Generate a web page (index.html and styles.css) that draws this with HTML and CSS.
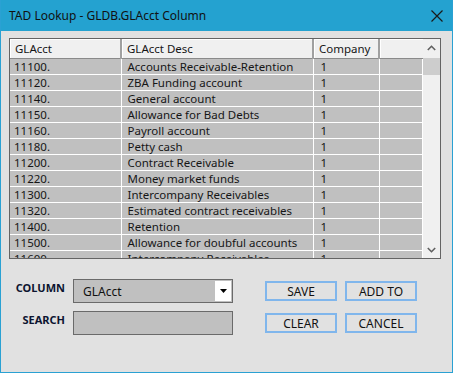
FILE: index.html
```html
<!DOCTYPE html>
<html>
<head>
	<title>TAD Lookup</title>
	<meta charset="utf-8">
	<link rel="stylesheet" href="styles.css">
</head>
<body>

<div class="window">
	<div class="titlebar">
		<span class="title">TAD Lookup - GLDB.GLAcct Column</span>
		<svg class="close" width="12" height="12" viewBox="0 0 12 12">
			<path d="M0.5 0.5 L11.5 11.5 M11.5 0.5 L0.5 11.5" stroke="#1a1a1a" stroke-width="1.2" fill="none"/>
		</svg>
	</div>

	<div class="listbox">
		<div class="grid-area">
			<table id="lookupList">
				<colgroup>
					<col style="width:111px">
					<col style="width:192px">
					<col style="width:66px">
					<col>
				</colgroup>
				<tr class="head">
					<th>GLAcct</th>
					<th>GLAcct Desc</th>
					<th>Company</th>
					<th></th>
				</tr>
				<tr><td>11100.</td><td>Accounts Receivable-Retention</td><td>1</td><td></td></tr>
				<tr><td>11120.</td><td>ZBA Funding account</td><td>1</td><td></td></tr>
				<tr><td>11140.</td><td>General account</td><td>1</td><td></td></tr>
				<tr><td>11150.</td><td>Allowance for Bad Debts</td><td>1</td><td></td></tr>
				<tr><td>11160.</td><td>Payroll account</td><td>1</td><td></td></tr>
				<tr><td>11180.</td><td>Petty cash</td><td>1</td><td></td></tr>
				<tr><td>11200.</td><td>Contract Receivable</td><td>1</td><td></td></tr>
				<tr><td>11220.</td><td>Money market funds</td><td>1</td><td></td></tr>
				<tr><td>11300.</td><td>Intercompany Receivables</td><td>1</td><td></td></tr>
				<tr><td>11320.</td><td>Estimated contract receivables</td><td>1</td><td></td></tr>
				<tr><td>11400.</td><td>Retention</td><td>1</td><td></td></tr>
				<tr><td>11500.</td><td>Allowance for doubful accounts</td><td>1</td><td></td></tr>
				<tr><td>11600.</td><td>Intercompany Receivables</td><td>1</td><td></td></tr>
			</table>
		</div>
		<div class="scrollbar">
			<div class="arrow">
				<svg width="9" height="6" viewBox="0 0 9 6"><path d="M0.8 5 L4.5 1.3 L8.2 5" stroke="#606060" stroke-width="1.6" fill="none"/></svg>
			</div>
			<div class="thumb"></div>
			<div class="track"></div>
			<div class="arrow">
				<svg width="9" height="6" viewBox="0 0 9 6"><path d="M0.8 1 L4.5 4.7 L8.2 1" stroke="#606060" stroke-width="1.6" fill="none"/></svg>
			</div>
		</div>
	</div>

	<div class="controls">
		<div class="fields">
			<label class="field-label">COLUMN</label>
			<div class="select-box">
				<span class="select-value">GLAcct</span>
				<span class="drop-btn">
					<svg width="7" height="4" viewBox="0 0 7 4"><path d="M0 0 L7 0 L3.5 4 Z" fill="#000"/></svg>
				</span>
			</div>
			<label class="field-label">SEARCH</label>
			<div class="search-box"></div>
		</div>
		<div class="buttons">
			<button type="button">SAVE</button>
			<button type="button">ADD TO</button>
			<button type="button">CLEAR</button>
			<button type="button">CANCEL</button>
		</div>
	</div>
</div>

</body>
</html>
```

FILE: styles.css
```css
body{
	margin: 0;
	font-family: "Noto Sans", "Open Sans", sans-serif;
	background-color: #e1e1e1;
}

.window{
	width: 453px;
	height: 373px;
	box-sizing: border-box;
	border: 1px solid #2aa1d3;
	border-top: none;
	background-color: #e1e1e1;
	overflow: hidden;
}

.titlebar{
	height: 31px;
	margin: 0 -1px;
	background-color: #24a2d0;
	display: flex;
	align-items: center;
	justify-content: space-between;
	padding: 0 10px 0 9px;
}

.title{
	font-size: 12px;
	color: #111;
}

.close{
	display: block;
}

/* list */

.listbox{
	margin: 7px 0 0 8px;
	width: 432px;
	height: 221px;
	box-sizing: border-box;
	border: 1px solid #646464;
	display: flex;
	background-color: #f0f0f0;
}

.grid-area{
	flex: 1;
	overflow: hidden;
}

#lookupList{
	border-collapse: collapse;
	table-layout: fixed;
	width: 413px;
	font-size: 11.5px;
	color: #161616;
}

#lookupList th{
	height: 19px;
	padding: 0 0 0 5px;
	text-align: left;
	font-weight: normal;
	background-color: #f0f0f0;
	border-right: 2px solid #a0a0a0;
	border-bottom: 1px solid #8a8a8a;
	box-shadow: inset 1px 1px 0 #fff;
	white-space: nowrap;
}

#lookupList th:last-child{
	border-right: none;
}

#lookupList td{
	height: 15px;
	padding: 0 0 0 4px;
	background-color: #c0c0c0;
	border-top: 1px solid #fff;
	border-right: 1px solid #fff;
	white-space: nowrap;
	overflow: hidden;
	line-height: 15px;
}

#lookupList td:nth-child(2){
	padding-left: 6px;
}

#lookupList td:nth-child(3){
	padding-left: 7px;
}

.scrollbar{
	width: 17px;
	display: flex;
	flex-direction: column;
	background-color: #f0f0f0;
}

.arrow{
	height: 17px;
	display: flex;
	align-items: center;
	justify-content: center;
}

.thumb{
	height: 17px;
	margin-top: 2px;
	background-color: #cdcdcd;
}

.track{
	flex: 1;
}

/* bottom controls */

.controls{
	display: flex;
	align-items: flex-start;
	padding: 20px 0 0 8px;
}

.fields{
	display: grid;
	grid-template-columns: 56px 160px;
	column-gap: 8px;
	row-gap: 8px;
}

.field-label{
	text-align: right;
	font-size: 11px;
	font-weight: bold;
	color: #0c1430;
	padding-top: 1px;
}

.select-box{
	height: 24px;
	box-sizing: border-box;
	border: 1px solid #6a6a6a;
	background-color: #c0c0c0;
	display: flex;
	align-items: center;
	justify-content: space-between;
}

.select-value{
	font-size: 12px;
	color: #111;
	padding-left: 9px;
}

.drop-btn{
	width: 16px;
	height: 20px;
	margin-right: 1px;
	background-color: #fff;
	display: flex;
	align-items: center;
	justify-content: center;
}

.search-box{
	height: 24px;
	box-sizing: border-box;
	border: 1px solid #6a6a6a;
	background-color: #c0c0c0;
}

.buttons{
	display: grid;
	grid-template-columns: 72px 72px;
	column-gap: 8px;
	row-gap: 12px;
	margin: 2px 0 0 32px;
}

button{
	height: 20px;
	box-sizing: border-box;
	padding: 0;
	background-color: #e1e1e1;
	border: 2px solid #80b6ec;
	font-family: "Noto Sans", "Open Sans", sans-serif;
	font-size: 12px;
	color: #111;
}
```
